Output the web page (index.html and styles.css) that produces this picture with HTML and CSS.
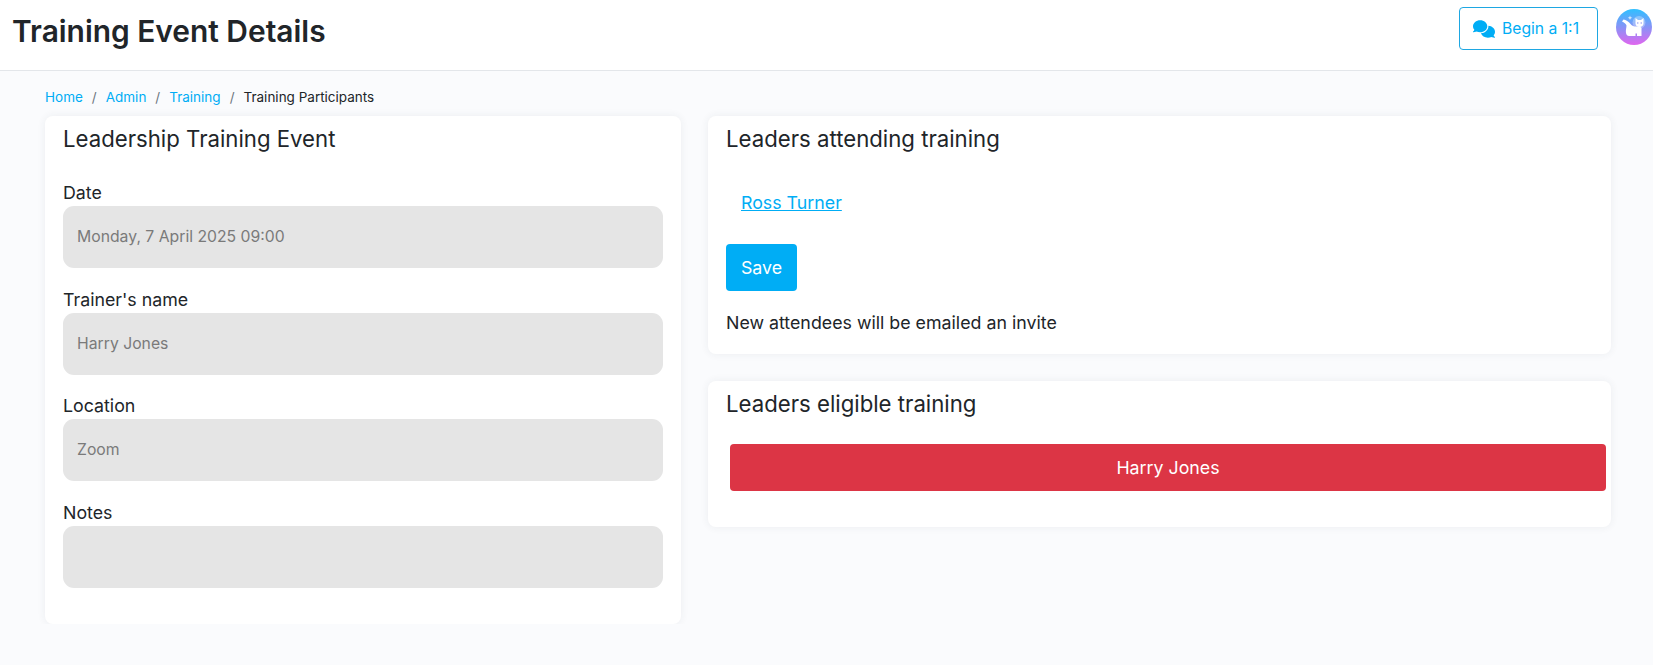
FILE: index.html
```html
<!DOCTYPE html>
<html lang="en">
<head>
  <meta charset="UTF-8">
  <meta name="viewport" content="width=device-width, initial-scale=1.0">
  <title>Training Event Details</title>
  <link rel="stylesheet" href="styles.css">
</head>
<body>
  <header class="top-bar">
    <h1 class="page-title">Training Event Details</h1>
    <div class="top-actions">
      <a class="btn-outline" href="#">
        <svg class="chat-icon" viewBox="0 0 640 512" aria-hidden="true"><path fill="currentColor" d="M208 352c114.9 0 208-78.8 208-176S322.9 0 208 0S0 78.8 0 176c0 38.6 14.7 74.3 39.6 103.4c-3.5 9.4-8.7 17.7-14.2 24.7c-4.8 6.2-9.7 11-13.3 14.3c-1.8 1.6-3.3 2.9-4.3 3.7c-.5 .4-.9 .7-1.1 .8l-.2 .2C1 327.2-1.4 334.4 .8 340.9S9.1 352 16 352c21.8 0 43.8-5.6 62.1-12.5c9.2-3.5 17.8-7.4 25.3-11.4C134.1 343.3 169.8 352 208 352zM448 176c0 112.3-99.1 196.9-216.5 207C255.8 457.4 336.4 512 432 512c38.2 0 73.9-8.7 104.7-23.9c7.5 4 16 7.9 25.2 11.4c18.3 6.9 40.3 12.5 62.1 12.5c6.9 0 13.1-4.5 15.2-11.1c2.1-6.6-.2-13.8-5.8-17.9l-.2-.2c-.2-.2-.6-.4-1.1-.8c-1-.8-2.5-2-4.3-3.7c-3.6-3.3-8.5-8.1-13.3-14.3c-5.5-7-10.7-15.4-14.2-24.7c24.9-29 39.6-64.7 39.6-103.4c0-92.8-84.9-168.9-192.6-175.5c.4 5.1 .6 10.3 .6 15.5z"/></svg>
        Begin a 1:1
      </a>
      <svg class="avatar" viewBox="0 0 36 36" aria-hidden="true">
        <defs>
          <linearGradient id="avatar-bg" x1="0" y1="0" x2="0" y2="1">
            <stop offset="0" stop-color="#2fc0ff"/>
            <stop offset="1" stop-color="#e066ee"/>
          </linearGradient>
        </defs>
        <circle cx="18" cy="18" r="18" fill="url(#avatar-bg)"/>
        <circle cx="23" cy="13.5" r="6.5" fill="#fff" fill-opacity="0.3"/>
        <path fill="#fff" d="M7.5 10.5L6 12.5C8 13.5 10 14.5 10.5 16.5C10.5 19 9.5 21 10 24C10.3 26 11.5 27 13 27H19.5V24.5H21V27H25.5V19L24 17.5H20C18 17.5 16 17 14.5 15C12.5 12.5 10 11 7.5 10.5Z"/>
        <path fill="#fff" d="M19.5 9l2.5 2h3l2.5-2v5.5c0 2-1.8 3.5-4 3.5s-4-1.5-4-3.5z"/>
        <circle cx="21.8" cy="14" r="0.7" fill="#8a8ff0"/>
        <circle cx="25.2" cy="14" r="0.7" fill="#8a8ff0"/>
        <path fill="#fff" fill-opacity="0.8" d="M14 6.5l.6 1.7 1.7 .6-1.7 .6-.6 1.7-.6-1.7-1.7-.6 1.7-.6z"/>
      </svg>
    </div>
  </header>

  <main class="content">
    <nav class="breadcrumb">
      <a href="#">Home</a>
      <span class="sep">/</span>
      <a href="#">Admin</a>
      <span class="sep">/</span>
      <a href="#">Training</a>
      <span class="sep">/</span>
      <span class="current">Training Participants</span>
    </nav>

    <div class="columns">
      <section class="card event-card">
        <h2 class="card-title">Leadership Training Event</h2>
        <div class="field">
          <label>Date</label>
          <div class="fake-input">Monday, 7 April 2025 09:00</div>
        </div>
        <div class="field">
          <label>Trainer's name</label>
          <div class="fake-input">Harry Jones</div>
        </div>
        <div class="field">
          <label>Location</label>
          <div class="fake-input">Zoom</div>
        </div>
        <div class="field">
          <label>Notes</label>
          <div class="fake-input"></div>
        </div>
      </section>

      <div class="side">
        <section class="card attending-card">
          <h2 class="card-title">Leaders attending training</h2>
          <a class="attendee" href="#">Ross Turner</a>
          <button class="btn-save">Save</button>
          <p class="hint">New attendees will be emailed an invite</p>
        </section>

        <section class="card eligible-card">
          <h2 class="card-title">Leaders eligible training</h2>
          <button class="btn-leader">Harry Jones</button>
        </section>
      </div>
    </div>
  </main>
</body>
</html>
```

FILE: styles.css
```css
* {
  box-sizing: border-box;
}
body {
  margin: 0;
  font-family: 'Inter', sans-serif;
  background-color: #fafbfd;
  color: #212529;
}
.top-bar {
  display: flex;
  justify-content: space-between;
  align-items: flex-start;
  height: 71px;
  padding: 7px 1px 0 12px;
  background-color: #fff;
  border-bottom: 1px solid #e3e6ea;
}
.page-title {
  margin: 6px 0 0;
  font-size: 29.9px;
  font-weight: 600;
  color: #212529;
}
.top-actions {
  display: flex;
  align-items: flex-start;
  gap: 18px;
}
.btn-outline {
  display: flex;
  align-items: center;
  gap: 7px;
  width: 139px;
  height: 43px;
  padding-left: 13px;
  font-size: 15.7px;
  color: #00adf5;
  text-decoration: none;
  border: 1px solid #1ea7e2;
  border-radius: 4px;
}
.chat-icon {
  width: 22px;
  height: 18px;
}
.avatar {
  width: 36px;
  height: 36px;
  margin-top: 2px;
}
.content {
  padding: 0 42px 0 45px;
}
.breadcrumb {
  display: flex;
  align-items: center;
  height: 45px;
  padding-top: 6px;
  font-size: 13.5px;
}
.breadcrumb a {
  color: #00adf5;
  text-decoration: none;
}
.sep {
  margin: 0 9px;
  color: #6c757d;
}
.current {
  color: #212529;
}
.columns {
  display: grid;
  grid-template-columns: 636px 903px;
  column-gap: 27px;
  align-items: start;
}
.card {
  background-color: #fff;
  border-radius: 8px;
  box-shadow: 0 0 8px rgba(40, 50, 70, 0.07);
  padding: 9px 18px;
}
.card-title {
  margin: 0;
  font-size: 22.2px;
  font-weight: 400;
  line-height: 28px;
  color: #212529;
}
.event-card {
  height: 508px;
}
.field {
  margin-top: 19.7px;
}
.event-card .card-title + .field {
  margin-top: 28px;
}
.field label {
  display: block;
  font-size: 17.8px;
  line-height: 23px;
}
.fake-input {
  height: 62px;
  margin-top: 2px;
  padding: 0 14px 1px;
  display: flex;
  align-items: center;
  font-size: 15.75px;
  color: #7a7a7a;
  background-color: #e5e5e5;
  border-radius: 11px;
}
.side {
  display: flex;
  flex-direction: column;
  gap: 27px;
}
.attending-card {
  height: 238px;
}
.attendee {
  display: block;
  width: fit-content;
  margin: 38px 0 0 15px;
  font-size: 17.8px;
  line-height: 24px;
  color: #00adf5;
}
.btn-save {
  display: block;
  width: 71px;
  height: 47px;
  margin-top: 29px;
  font-family: inherit;
  font-size: 17.8px;
  color: #fff;
  background-color: #00adf5;
  border: none;
  border-radius: 4px;
}
.hint {
  margin: 20px 0 0;
  font-size: 17.8px;
  line-height: 24px;
}
.eligible-card {
  height: 146px;
}
.btn-leader {
  display: block;
  width: 876px;
  height: 47px;
  margin: 26px 0 0 4px;
  font-family: inherit;
  font-size: 17.8px;
  color: #fff;
  background-color: #dc3545;
  border: none;
  border-radius: 4px;
}
```
